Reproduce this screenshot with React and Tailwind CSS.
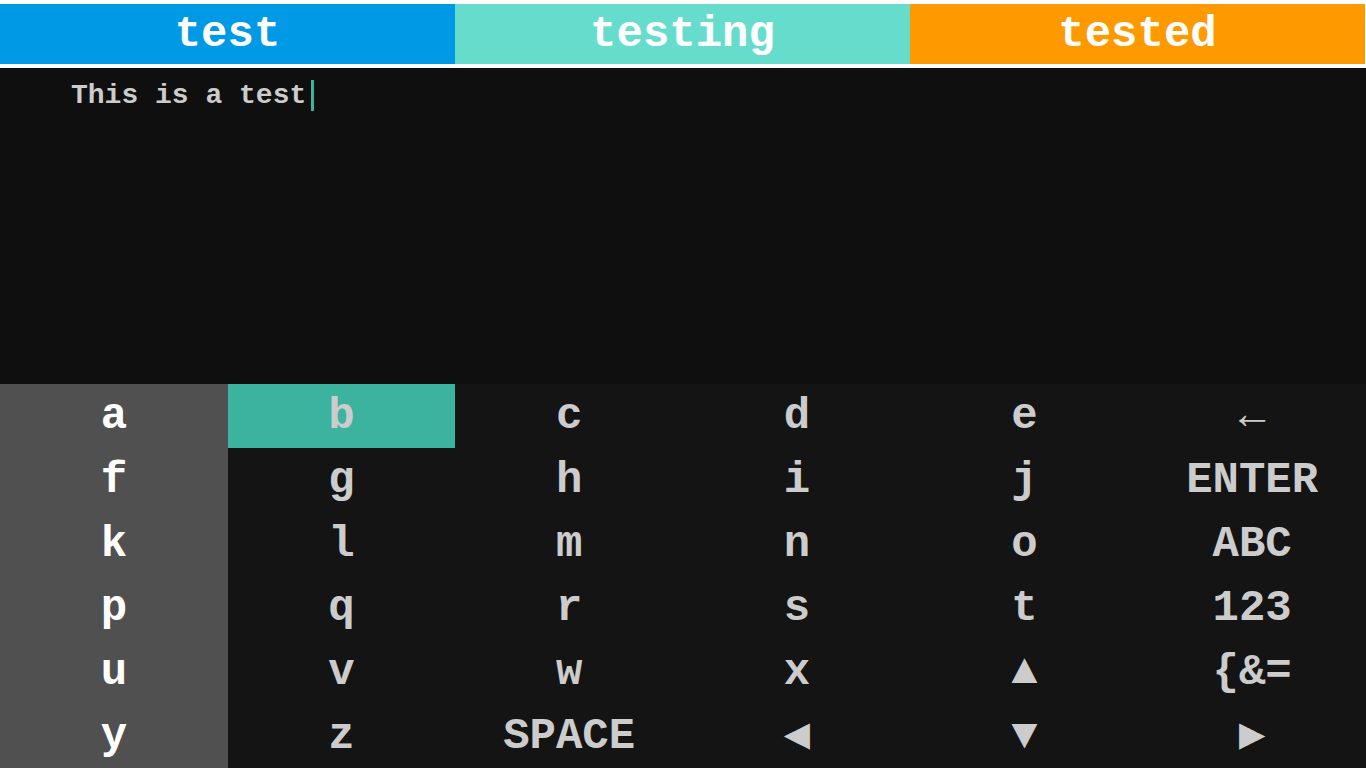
const tabs = [
  { label: "test", bg: "bg-[#0099e6]" },
  { label: "testing", bg: "bg-[#66ddcc]" },
  { label: "tested", bg: "bg-[#ff9900]" },
]

const rows = [
  ["a", "b", "c", "d", "e", "←"],
  ["f", "g", "h", "i", "j", "ENTER"],
  ["k", "l", "m", "n", "o", "ABC"],
  ["p", "q", "r", "s", "t", "123"],
  ["u", "v", "w", "x", "▲", "{&="],
  ["y", "z", "SPACE", "◀", "▼", "▶"],
]

function Key({ label, col, active }) {
  let cls = "flex items-center justify-center text-[#cccccc]"
  if (col === 0) cls = "flex items-center justify-center text-white bg-[#505050]"
  if (active) cls = "flex items-center justify-center text-[#cccccc] bg-[#3bb39f]"
  return <div className={cls}>{label}</div>
}

export default function App() {
  return (
    <div className="h-[768px] w-[1366px] bg-white pt-[4px] flex flex-col overflow-hidden font-['Liberation_Mono',monospace] font-bold">
      <div className="grid grid-cols-3 h-[60px] pr-px">
        {tabs.map((t) => (
          <div key={t.label} className={`${t.bg} flex items-center justify-center text-white text-[44px] leading-none`}>
            {t.label}
          </div>
        ))}
      </div>

      <div className="mt-[4px] h-[316px] bg-[#0f0f0f] pl-[71px] pt-[12px]">
        <div className="flex items-stretch h-[31px]">
          <span className="text-[28px] leading-[31px] text-[#cccccc]">This is a test</span>
          <span className="ml-[5px] w-[3px] bg-[#3bb39f]" />
        </div>
      </div>

      <div className="h-[384px] bg-[#141414] grid grid-cols-6 grid-rows-6 text-[44px] leading-none">
        {rows.map((row, r) =>
          row.map((k, c) => (
            <Key key={r + "-" + c} label={k} col={c} active={r === 0 && c === 1} />
          ))
        )}
      </div>
    </div>
  )
}
